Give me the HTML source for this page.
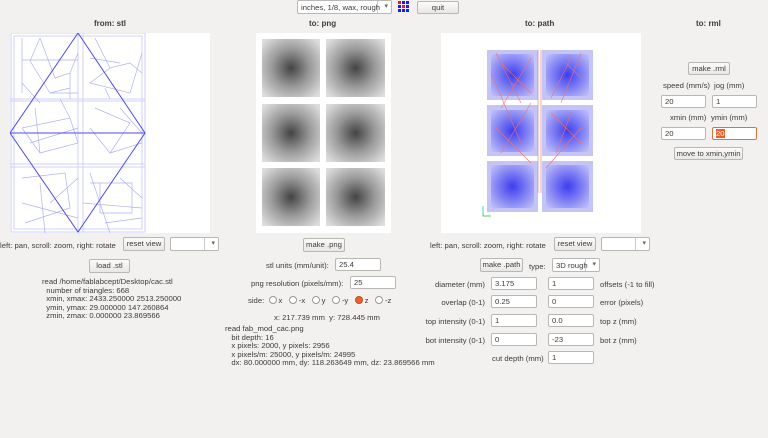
<!DOCTYPE html>
<html><head><meta charset="utf-8"><style>
*{box-sizing:border-box;margin:0;padding:0}
body{width:768px;height:438px;background:#f2f1f0;font-family:"Liberation Sans",sans-serif;font-size:7.7px;color:#3c3c3c;position:relative;overflow:hidden}
.a{position:absolute;white-space:nowrap}
.b{position:absolute;border:1px solid #b9b7b3;border-radius:2px;background:linear-gradient(#fbfbfa,#e8e7e5);text-align:center;line-height:12px;font-size:7.7px;color:#3c3c3c;white-space:nowrap;overflow:hidden}
.i{position:absolute;border:1px solid #b9b7b3;border-radius:2px;background:#fff;height:13px;line-height:11px;padding-left:3px;font-size:7.7px}
.h{position:absolute;font-weight:bold;font-size:8px;color:#3c3c3c;white-space:nowrap}
.dd{position:absolute;border:1px solid #b9b7b3;border-radius:2px;background:#fff;height:14px;white-space:nowrap}
.dd:after{content:"▾";position:absolute;right:3px;top:1px;font-size:7px;color:#666}
.dd i{position:absolute;right:13px;top:0;bottom:0;border-left:1px solid #ccc}
.r{display:inline-block;width:8px;height:8px;border:1px solid #999;border-radius:50%;background:#fff;vertical-align:-1px;margin-right:2px}
.lab{position:absolute;text-align:right;white-space:nowrap}
</style></head><body>
<div class="dd" style="left:297px;top:0;width:95px"><i></i><span style="position:absolute;left:3px;top:2px">inches, 1/8, wax, rough</span></div>
<svg class="a" style="left:398px;top:1px" width="11" height="13">
<g fill="#1a1aff"><rect x="0" y="0" width="3" height="3" fill="#e02020"/><rect x="4" y="0" width="3" height="3"/><rect x="8" y="0" width="3" height="3"/>
<rect x="0" y="4" width="3" height="3"/><rect x="4" y="4" width="3" height="3" fill="#e02020"/><rect x="8" y="4" width="3" height="3"/>
<rect x="0" y="8" width="3" height="3"/><rect x="4" y="8" width="3" height="3"/><rect x="8" y="8" width="3" height="3"/></g></svg>
<div class="b" style="left:417px;top:1px;width:42px;height:13px">quit</div>

<div class="h" style="left:94px;top:19px">from: stl</div>
<div class="h" style="left:309px;top:19px">to: png</div>
<div class="h" style="left:525px;top:19px">to: path</div>
<div class="h" style="left:696px;top:19px">to: rml</div>

<!-- STL -->
<svg class="a" style="left:10px;top:33px" width="200" height="200">
<rect width="200" height="200" fill="#fff"/>
<g stroke="#d0d0fa" stroke-width="1" fill="none">
<rect x="1" y="0" width="134" height="199"/><rect x="4" y="3" width="128" height="193"/>
<line x1="68" y1="0" x2="68" y2="199"/><line x1="73" y1="0" x2="73" y2="199"/>
<line x1="0" y1="66" x2="135" y2="66"/><line x1="0" y1="68" x2="135" y2="68"/>
<line x1="0" y1="131" x2="135" y2="131"/><line x1="0" y1="134" x2="135" y2="134"/>
</g>
<g stroke="#b0b0f4" stroke-width="0.7" fill="none">
<path d="M12 5L12 60M12 27L68 27M30 5L45 45L60 40L68 20M12 50L30 70M20 28L40 60L60 55M30 5L20 28M40 60L68 60M60 40L60 66M85 5L100 35L120 30L132 40M80 25L110 30M100 35L80 50L120 60L132 20M95 55L100 66M12 95L60 85L68 110L30 120L12 95M25 75L30 120M60 85L50 66M20 110L68 95M85 75L120 90L100 120L80 95M110 75L132 100M100 120L132 110M12 145L55 140L60 175L15 190M30 150L35 200M12 170L68 185M40 170L68 145M80 150L122 150L122 180L90 180L90 150M73 170L132 175M80 140L100 200M110 145L132 165M95 190L132 185"/>
</g>
<g stroke="#4a4af0" stroke-width="1" fill="none"><path d="M68 0L135 100L68 199L0 100Z"/><line x1="0" y1="100" x2="135" y2="100"/></g>
</svg>

<!-- PNG -->
<div class="a" style="left:256px;top:33px;width:135px;height:200px;background:#fff"></div>
<svg class="a" style="left:256px;top:33px" width="135" height="200">
<defs>
<radialGradient id="g" cx="50%" cy="50%" r="65%"><stop offset="0" stop-color="#444"/><stop offset="0.5" stop-color="#999"/><stop offset="1" stop-color="#dcdcdc"/></radialGradient>
</defs>
<g fill="url(#g)">
<rect x="6" y="6" width="58" height="58"/><rect x="70" y="6" width="59" height="58"/>
<rect x="6" y="71" width="58" height="58"/><rect x="70" y="71" width="59" height="58"/>
<rect x="6" y="135" width="58" height="58"/><rect x="70" y="135" width="59" height="58"/>
</g></svg>

<!-- PATH -->
<svg class="a" style="left:441px;top:33px" width="200" height="200">
<rect width="200" height="200" fill="#fff"/>
<defs><radialGradient id="p" r="70%"><stop offset="0" stop-color="#3d3df0"/><stop offset="1" stop-color="#c4c4f8"/></radialGradient></defs>
<g fill="#c4c4f6"><rect x="46" y="17" width="51" height="50"/><rect x="101" y="17" width="51" height="50"/><rect x="46" y="72" width="51" height="51"/><rect x="101" y="72" width="51" height="51"/><rect x="46" y="128" width="51" height="51"/><rect x="101" y="128" width="51" height="51"/></g>
<g fill="url(#p)"><rect x="50" y="21" width="43" height="42"/><rect x="105" y="21" width="43" height="42"/><rect x="50" y="77" width="43" height="42"/><rect x="105" y="77" width="43" height="42"/><rect x="50" y="132" width="43" height="43"/><rect x="105" y="132" width="43" height="43"/></g>
<g stroke="#f07070" stroke-width="0.6" fill="none">
<path d="M97 17L97 160M100 17L100 160M55 20L80 70M60 30L90 60M90 25L60 75M130 25L110 65M140 20L120 70M50 40L80 110M90 70L60 120M110 80L140 110M130 80L115 120M55 95L90 130M140 95L105 135M125 30L140 45M70 50L80 55"/>
</g>
<path d="M42 173V183H50" stroke="#4ad060" fill="none"/><path d="M42 173V180" stroke="#40d8d0"/>
</svg>

<!-- RML -->
<div class="b" style="left:688px;top:62px;width:42px;height:13px">make .rml</div>
<div class="a" style="left:663px;top:81px">speed (mm/s)</div><div class="a" style="left:714px;top:81px">jog (mm)</div>
<div class="i" style="left:661px;top:95px;width:45px">20</div><div class="i" style="left:712px;top:95px;width:45px">1</div>
<div class="a" style="left:670px;top:113px">xmin (mm)</div><div class="a" style="left:711px;top:113px">ymin (mm)</div>
<div class="i" style="left:661px;top:127px;width:45px">20</div><div class="i" style="left:712px;top:127px;width:45px;border-color:#e07040"><span style="background:#e86030;color:#fff">20</span></div>
<div class="b" style="left:674px;top:147px;width:69px;height:13px">move to xmin,ymin</div>

<!-- STL controls -->
<div class="a" style="left:0;top:241px">left: pan, scroll: zoom, right: rotate</div>
<div class="b" style="left:123px;top:237px;width:42px;height:14px">reset view</div>
<div class="dd" style="left:170px;top:237px;width:49px"><i></i></div>
<div class="b" style="left:89px;top:259px;width:41px;height:14px">load .stl</div>
<div class="a" style="left:42px;top:278px;line-height:8.5px">read /home/fablabcept/Desktop/cac.stl<br>&nbsp;&nbsp;number of triangles: 668<br>&nbsp;&nbsp;xmin, xmax: 2433.250000 2513.250000<br>&nbsp;&nbsp;ymin, ymax: 29.000000 147.260864<br>&nbsp;&nbsp;zmin, zmax: 0.000000 23.869566</div>

<!-- PNG controls -->
<div class="b" style="left:303px;top:238px;width:42px;height:14px">make .png</div>
<div class="a" style="left:266px;top:261px">stl units (mm/unit):</div>
<div class="i" style="left:335px;top:258px;width:46px">25.4</div>
<div class="a" style="left:251px;top:279px">png resolution (pixels/mm):</div>
<div class="i" style="left:350px;top:276px;width:46px">25</div>
<div class="a" style="left:248px;top:296px">side: &nbsp;<span class="r"></span>x &nbsp;&nbsp;<span class="r"></span>-x &nbsp;&nbsp;<span class="r"></span>y &nbsp;&nbsp;<span class="r"></span>-y &nbsp;&nbsp;<span class="r" style="background:#e86030;border-color:#c05020"></span>z &nbsp;&nbsp;<span class="r"></span>-z</div>
<div class="a" style="left:274px;top:313px">x: 217.739 mm &nbsp;y: 728.445 mm</div>
<div class="a" style="left:225px;top:325px;line-height:8.5px">read fab_mod_cac.png<br>&nbsp;&nbsp;&nbsp;bit depth: 16<br>&nbsp;&nbsp;&nbsp;x pixels: 2000, y pixels: 2956<br>&nbsp;&nbsp;&nbsp;x pixels/m: 25000, y pixels/m: 24995<br>&nbsp;&nbsp;&nbsp;dx: 80.000000 mm, dy: 118.263649 mm, dz: 23.869566 mm</div>

<!-- PATH controls -->
<div class="a" style="left:430px;top:241px">left: pan, scroll: zoom, right: rotate</div>
<div class="b" style="left:554px;top:237px;width:42px;height:14px">reset view</div>
<div class="dd" style="left:601px;top:237px;width:49px"><i></i></div>
<div class="b" style="left:480px;top:258px;width:43px;height:14px">make .path</div>
<div class="a" style="left:529px;top:262px">type:</div>
<div class="dd" style="left:552px;top:258px;width:48px"><i></i><span style="position:absolute;left:3px;top:2px">3D rough</span></div>
<div class="lab" style="right:283px;top:280px">diameter (mm)</div>
<div class="i" style="left:491px;top:277px;width:46px">3.175</div><div class="i" style="left:548px;top:277px;width:46px">1</div><div class="a" style="left:600px;top:280px">offsets (-1 to fill)</div>
<div class="lab" style="right:283px;top:298px">overlap (0-1)</div>
<div class="i" style="left:491px;top:295px;width:46px">0.25</div><div class="i" style="left:548px;top:295px;width:46px">0</div><div class="a" style="left:600px;top:298px">error (pixels)</div>
<div class="lab" style="right:283px;top:317px">top intensity (0-1)</div>
<div class="i" style="left:491px;top:314px;width:46px">1</div><div class="i" style="left:548px;top:314px;width:46px">0.0</div><div class="a" style="left:600px;top:317px">top z (mm)</div>
<div class="lab" style="right:283px;top:336px">bot intensity (0-1)</div>
<div class="i" style="left:491px;top:333px;width:46px">0</div><div class="i" style="left:548px;top:333px;width:46px">-23</div><div class="a" style="left:600px;top:336px">bot z (mm)</div>
<div class="a" style="left:492px;top:354px">cut depth (mm)</div>
<div class="i" style="left:548px;top:351px;width:46px">1</div>
</body></html>
